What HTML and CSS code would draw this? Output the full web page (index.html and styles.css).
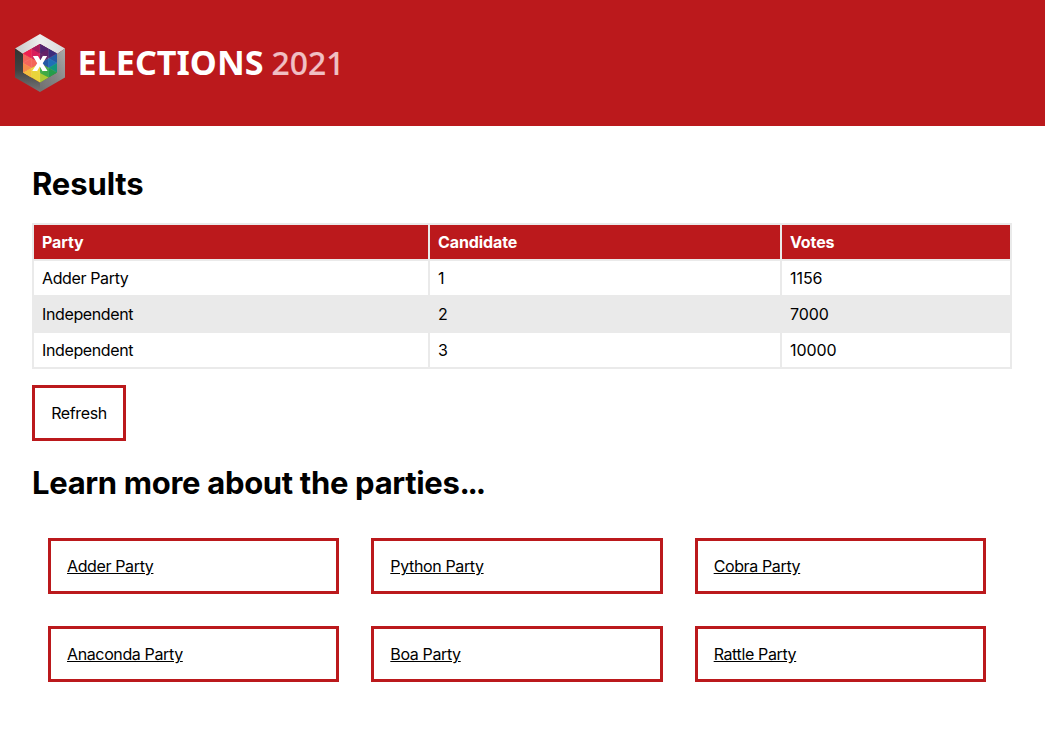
FILE: index.html
```html
<!DOCTYPE html>
<html lang="en">
<head>
<meta charset="utf-8">
<title>Elections 2021</title>
<link rel="stylesheet" href="styles.css">
</head>
<body>
<header class="banner">
  <svg class="logo" viewBox="0 0 360 126" role="img" aria-label="Elections 2021">
    <defs>
      <linearGradient id="top" x1="0" y1="0" x2="1" y2="0"><stop offset="0" stop-color="#c8c8c8"/><stop offset=".5" stop-color="#ededed"/><stop offset="1" stop-color="#d9d9d9"/></linearGradient>
      <linearGradient id="left" x1="0" y1="0" x2="0" y2="1"><stop offset="0" stop-color="#303432"/><stop offset=".5" stop-color="#414343"/><stop offset="1" stop-color="#777"/></linearGradient>
      <linearGradient id="right" x1="1" y1="0" x2="0" y2="1"><stop offset="0" stop-color="#aaa"/><stop offset=".5" stop-color="#858585"/><stop offset="1" stop-color="#707070"/></linearGradient>
    </defs>
    <path fill="url(#top)" d="M15 48.5 40 34 65 48.5 57 54 40 44 23 54Z"/>
    <path fill="url(#left)" d="M15 48.5 23 54V72.5L40 82.5V92L15 77.5Z"/>
    <path fill="url(#right)" d="M65 48.5 57 54V72.5L40 82.5V92L65 77.5Z"/>
    <path fill="#d91c5c" d="M40 63 23 53.5 40 44Z"/>
    <path fill="#642168" d="M40 63V44L57 53.5Z"/>
    <path fill="#2459a5" d="M40 63 57 53.5V72.5Z"/>
    <path fill="#3eaa45" d="M40 63 57 72.5 40 82.5Z"/>
    <path fill="#e9d43b" d="M40 63V82.5L23 72.5Z"/>
    <path fill="#f4655a" d="M40 63 23 72.5V53.5Z"/>
    <path fill="#a3195b" d="M31.5 48.7 40 44V53.5Z"/>
    <path fill="#f0204f" d="M23 53.5 31.5 48.7V58.2Z"/>
    <path fill="#51246f" d="M40 44 48.5 48.7 40 53.5Z"/>
    <path fill="#3b2c7b" d="M48.5 48.7 57 53.5 48.5 58.2Z"/>
    <path fill="#1f70b7" d="M48.5 58.2 57 63 48.5 67.8Z"/>
    <path fill="#12977b" d="M57 63V72.5L48.5 67.8Z"/>
    <path fill="#249d4b" d="M48.5 67.8 57 72.5 48.5 77.5Z"/>
    <path fill="#abc936" d="M40 73 48.5 77.5 40 82.5Z"/>
    <path fill="#f4bd3d" d="M23 72.5 31.5 67.8V77.5Z"/>
    <path fill="#f58b4b" d="M23 63 31.5 67.8 23 72.5Z"/>
    <path class="facets" d="M23 53.5 57 72.5M57 53.5 23 72.5M40 44V82.5M31.5 48.7V77.5M48.5 48.7V77.5M23 63 40 53.5 57 63 40 73Z"/>
    <path fill="#fff" d="M32.8 56H38L40.4 60.2 42.8 56H47.2L42.8 63.2 47.6 71H42.4L39.8 66.5 37.2 71H32.2L37.2 63.2Z"/>
    <text class="word" x="77.5" y="75" textLength="186" lengthAdjust="spacingAndGlyphs">ELECTIONS</text>
    <text class="year" x="271.5" y="75" textLength="73" lengthAdjust="spacingAndGlyphs">2021</text>
  </svg>
</header>
<main class="content">
  <h1 class="heading">Results</h1>
  <table class="results">
    <colgroup><col class="col-party"><col class="col-candidate"><col class="col-votes"></colgroup>
    <thead><tr><th>Party</th><th>Candidate</th><th>Votes</th></tr></thead>
    <tbody>
      <tr><td>Adder Party</td><td>1</td><td class="votes">1156</td></tr>
      <tr class="shaded"><td>Independent</td><td>2</td><td class="votes">7000</td></tr>
      <tr><td>Independent</td><td>3</td><td class="votes">10000</td></tr>
    </tbody>
  </table>
  <button class="refresh" type="button">Refresh</button>
  <h1 class="heading heading-parties">Learn more about the parties<span class="dots">...</span></h1>
  <nav class="parties">
    <div class="party"><a href="#">Adder Party</a></div>
    <div class="party"><a href="#">Python Party</a></div>
    <div class="party"><a href="#">Cobra Party</a></div>
    <div class="party"><a href="#">Anaconda Party</a></div>
    <div class="party"><a href="#">Boa Party</a></div>
    <div class="party"><a href="#">Rattle Party</a></div>
  </nav>
</main>
</body>
</html>
```
FILE: styles.css
```css
* { box-sizing: border-box; }
body {
  margin: 0;
  background: #fff;
  color: #000;
  font: 16px/18px Inter, "Liberation Sans", sans-serif;
  letter-spacing: -0.37px;
}
.banner { height: 126px; background: #bb191c; }
.logo { display: block; width: 360px; height: 126px; }
.facets { fill: none; stroke: #fff; stroke-opacity: .15; stroke-width: .5; }
.word, .year { font-family: "Noto Sans", "Open Sans", sans-serif; font-size: 34px; letter-spacing: 0; fill: #fff; }
.word { font-weight: 700; }
.year { font-size: 33px; font-weight: 500; fill: #f0bfc3; stroke: #f0bfc3; stroke-width: .2; }
.content { padding: 39px 33px 0 32px; }
.heading { margin: 0; font-size: 31px; line-height: 38px; font-weight: 700; letter-spacing: -0.12px; }
.results { width: 980px; margin: 20px 0 16px; border-collapse: collapse; table-layout: fixed; }
.results th, .results td { padding: 8px; border: 2px solid #eaeaea; text-align: left; height: 36px; }
.results th { background: #bb191c; color: #fff; font-weight: 700; letter-spacing: -0.1px; }
.results .votes { letter-spacing: -0.05px; }
.col-party { width: 396px; }
.col-candidate { width: 352px; }
.shaded { background: #eaeaea; }
.refresh {
  display: block;
  width: 94px;
  height: 56px;
  padding: 16px 0;
  border: 3px solid #bb191c;
  background: #fff;
  color: #000;
  font: inherit;
  letter-spacing: inherit;
}
.heading-parties { margin-top: 23px; letter-spacing: -0.32px; }
.dots { letter-spacing: -2.3px; }
.parties { display: grid; grid-template-columns: repeat(3, 1fr); gap: 32px; width: 938px; margin: 36px 0 0 16px; }
.party { padding: 16px; border: 3px solid #bb191c; }
.party a { color: #000; text-decoration: underline; }
```
